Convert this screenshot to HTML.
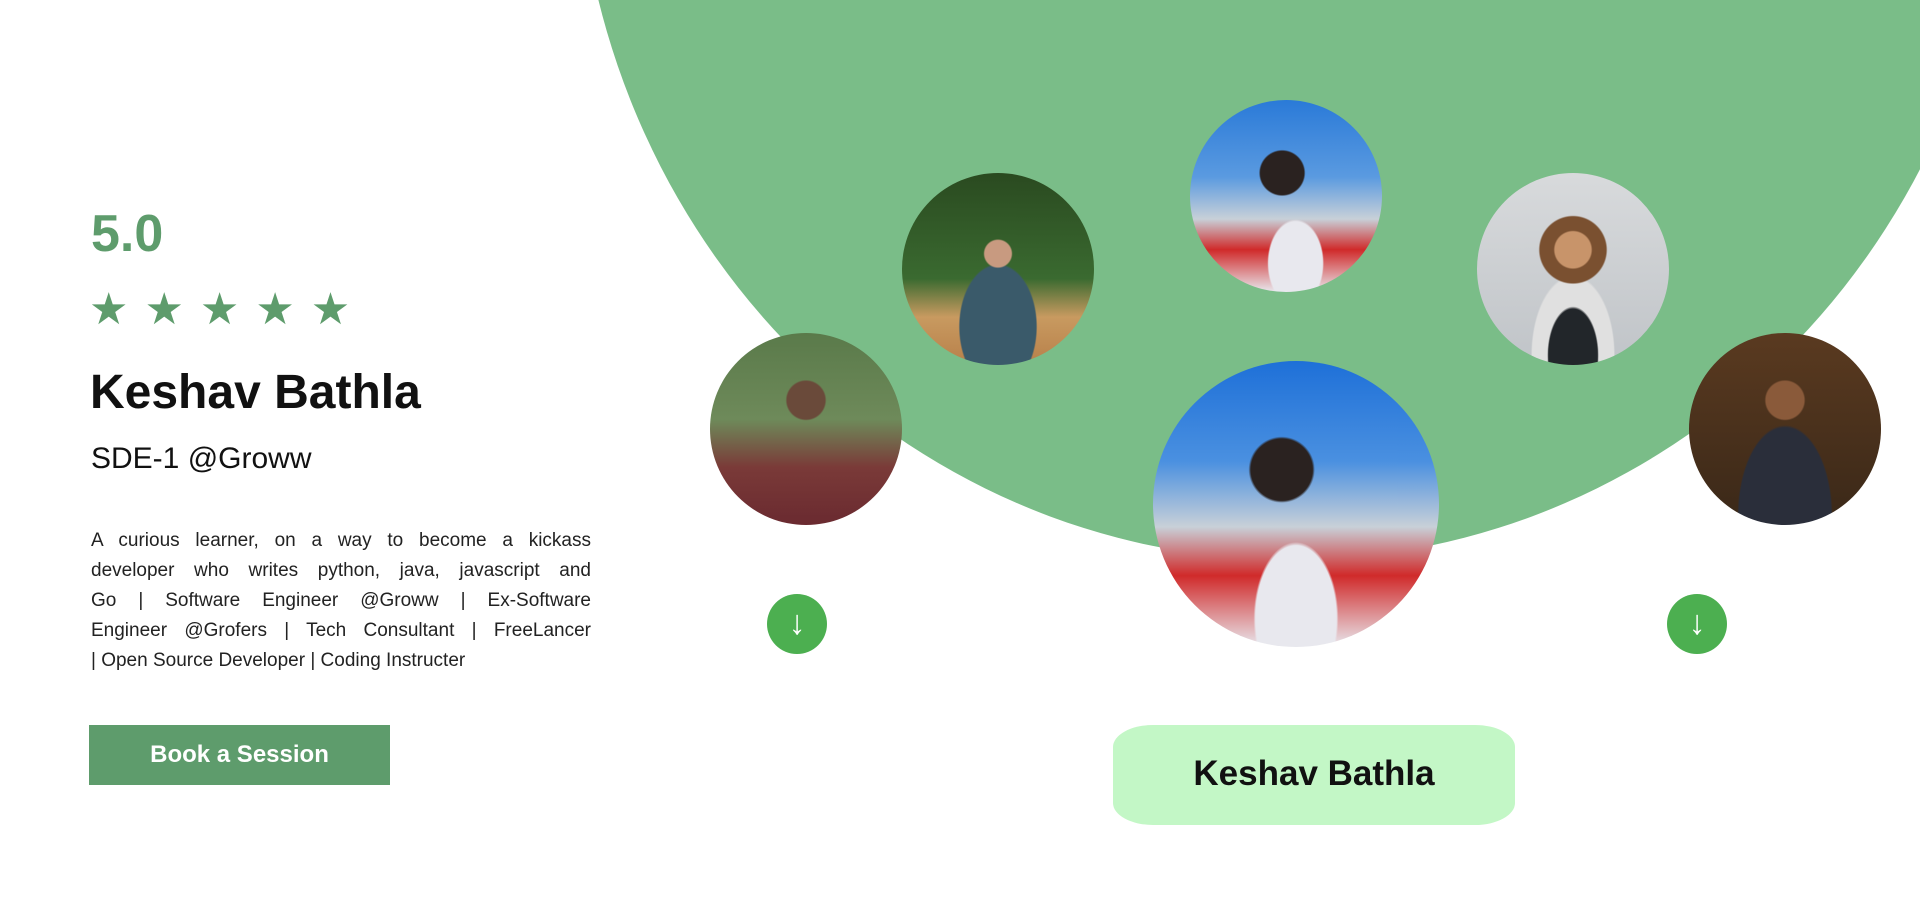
<!DOCTYPE html>
<html><head><meta charset="utf-8"><style>
*{margin:0;padding:0;box-sizing:border-box}
body{width:1920px;height:912px;overflow:hidden;background:#fff;font-family:"Liberation Sans",sans-serif;position:relative}
.bg{position:absolute;left:576px;top:-930px;width:1430px;height:1490px;border-radius:50%;background:#7abd88}
.a{position:absolute}
.rating{left:91px;top:204px;font-size:52px;font-weight:bold;color:#5e9c6c}
.stars{left:89px;top:284px;font-size:44px;color:#5e9c6c;letter-spacing:16px}
.name{left:90px;top:365px;font-size:48px;font-weight:bold;color:#111}
.role{left:91px;top:442px;font-size:30px;color:#111}
.para{left:91px;top:526px;width:500px;font-size:19px;line-height:30px;color:#222}
.para span{display:block;text-align:justify;text-align-last:justify;white-space:nowrap}
.para span.l{text-align-last:left}
.btn{left:89px;top:725px;width:301px;height:60px;background:#5e9c6c;color:#fff;font-size:24px;font-weight:bold;text-align:center;line-height:60px}
.p{position:absolute;border-radius:50%;overflow:hidden}
.arr{position:absolute;width:60px;height:60px;border-radius:50%;background:#4caf50;color:#fff;font-size:34px;text-align:center;line-height:58px}
.pill{left:1113px;top:725px;width:402px;height:100px;background:#c3f7c6;border-radius:40px/22px;text-align:center;line-height:98px;font-size:35px;font-weight:bold;color:#111}
</style></head><body>
<div class="bg"></div>
<div class="a rating">5.0</div>
<div class="a stars">★★★★★</div>
<div class="a name">Keshav Bathla</div>
<div class="a role">SDE-1 @Groww</div>
<div class="a para"><span>A curious learner, on a way to become a kickass</span><span>developer who writes python, java, javascript and</span><span>Go | Software Engineer @Groww | Ex-Software</span><span>Engineer @Grofers | Tech Consultant | FreeLancer</span><span class="l">| Open Source Developer | Coding Instructer</span></div>
<div class="a btn">Book a Session</div>

<div class="p" style="left:710px;top:333px;width:192px;height:192px;background:radial-gradient(circle at 50% 35%,#6a4a3a 0 12%,transparent 13%),linear-gradient(#5a7a4a 0%,#6e8a5a 45%,#7a3a38 70%,#6a2a30 100%)"></div>
<div class="p" style="left:902px;top:173px;width:192px;height:192px;background:radial-gradient(circle at 50% 42%,#c89a80 0 9%,transparent 10%),radial-gradient(ellipse at 50% 80%,#3a5a6a 0 28%,transparent 29%),linear-gradient(#2a4a20 0%,#3a6a30 55%,#c89a60 75%,#b8804a 100%)"></div>
<div class="p" style="left:1190px;top:100px;width:192px;height:192px;background:radial-gradient(circle at 48% 38%,#2a2220 0 14%,transparent 15%),radial-gradient(ellipse at 55% 85%,#e8e8ee 0 18%,transparent 19%),linear-gradient(#2a7ad8 0%,#5a9ae0 40%,#c8d0d8 62%,#d02a2a 78%,#e8e8ee 100%)"></div>
<div class="p" style="left:1477px;top:173px;width:192px;height:192px;background:radial-gradient(circle at 50% 40%,#c8946a 0 12%,#7a5030 13% 22%,transparent 23%),radial-gradient(ellipse at 50% 95%,#22262a 0 18%,#e0e0e0 19% 30%,transparent 31%),linear-gradient(#d8dadc,#c0c4c8)"></div>
<div class="p" style="left:1689px;top:333px;width:192px;height:192px;background:radial-gradient(circle at 50% 35%,#8a5a3a 0 12%,transparent 13%),radial-gradient(ellipse at 50% 95%,#2a2e3a 0 34%,transparent 35%),linear-gradient(#5a3a20,#3a2818)"></div>
<div class="p" style="left:1153px;top:361px;width:286px;height:286px;background:radial-gradient(circle at 45% 38%,#2a2220 0 13%,transparent 14%),radial-gradient(ellipse at 50% 90%,#e8e8ee 0 20%,transparent 21%),linear-gradient(#1e70d8 0%,#4a90e0 35%,#c8d0d8 58%,#d02a2a 75%,#e8e8ee 100%)"></div>

<div class="arr" style="left:767px;top:594px">↓</div>
<div class="arr" style="left:1667px;top:594px">↓</div>
<div class="a pill">Keshav Bathla</div>
</body></html>
